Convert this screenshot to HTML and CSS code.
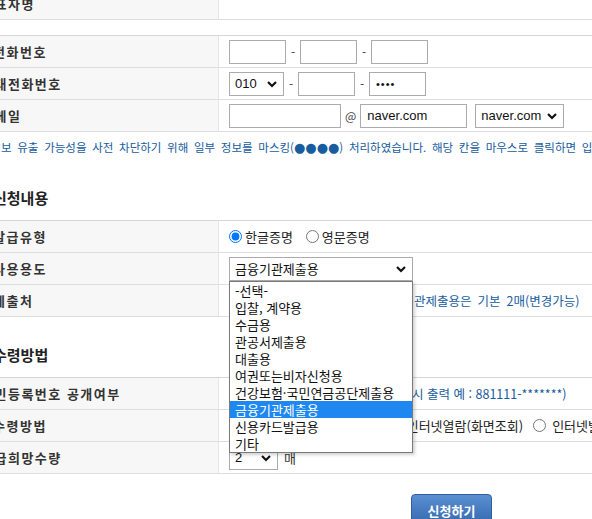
FILE: index.html
```html
<!DOCTYPE html>
<html lang="ko">
<head>
<meta charset="utf-8">
<title>증명서 발급 신청</title>
<link rel="stylesheet" href="styles.css">
</head>
<body>
<div class="page">
  <div class="table">
    <div class="row">
      <div class="label label--wide">대표자명</div>
      <div class="value"></div>
    </div>
  </div>

  <div class="table table--next">
    <div class="row">
      <div class="label">전화번호</div>
      <div class="value">
        <input class="field field--phone" type="text">
        <span class="dash">-</span>
        <input class="field field--phone" type="text">
        <span class="dash">-</span>
        <input class="field field--phone" type="text">
      </div>
    </div>
    <div class="row">
      <div class="label label--wide">휴대전화번호</div>
      <div class="value">
        <div class="select select--tel"><span>010</span><svg class="chev" viewBox="0 0 10 6"><path d="M1 1 L5 5 L9 1" /></svg></div>
        <span class="dash">-</span>
        <input class="field field--phone" type="text">
        <span class="dash">-</span>
        <input class="field field--phone field--secret" type="password" value="1234">
      </div>
    </div>
    <div class="row">
      <div class="label label--wide">이메일</div>
      <div class="value">
        <input class="field field--mailid" type="text">
        <span class="at">@</span>
        <input class="field field--domain" type="text" value="naver.com">
        <div class="select select--domain"><span>naver.com</span><svg class="chev" viewBox="0 0 10 6"><path d="M1 1 L5 5 L9 1" /></svg></div>
      </div>
    </div>
  </div>

  <p class="notice">※ 개인정보 유출 가능성을 사전 차단하기 위해 일부 정보를 마스킹(<span class="dots">●●●●</span>) 처리하였습니다. 해당 칸을 마우스로 클릭하면 입력할 수 있습니다.</p>

  <h2 class="section-title section-title--first">신청내용</h2>
  <div class="table">
    <div class="row">
      <div class="label">발급유형</div>
      <div class="value">
        <label class="radio"><input type="radio" name="lang" checked>한글증명</label>
        <label class="radio"><input type="radio" name="lang">영문증명</label>
      </div>
    </div>
    <div class="row">
      <div class="label">사용용도</div>
      <div class="value">
        <div class="select-wrap">
          <div class="select select--purpose"><span>금융기관제출용</span><svg class="chev" viewBox="0 0 10 6"><path d="M1 1 L5 5 L9 1" /></svg></div>
          <ul class="dropdown">
            <li>-선택-</li>
            <li>입찰, 계약용</li>
            <li>수금용</li>
            <li>관공서제출용</li>
            <li>대출용</li>
            <li>여권또는비자신청용</li>
            <li>건강보험·국민연금공단제출용</li>
            <li class="is-active">금융기관제출용</li>
            <li>신용카드발급용</li>
            <li>기타</li>
          </ul>
        </div>
      </div>
    </div>
    <div class="row">
      <div class="label">제출처</div>
      <div class="value">
        <input class="field field--dest" type="text">
        <span class="note note--dest">※ 금융기관제출용은 기본 2매(변경가능)</span>
      </div>
    </div>
  </div>

  <h2 class="section-title">수령방법</h2>
  <div class="table">
    <div class="row">
      <div class="label label--wide">주민등록번호 공개여부</div>
      <div class="value">
        <label class="radio"><input type="radio" name="open">공개</label>
        <label class="radio"><input type="radio" name="open" checked>비공개</label>
        <span class="note">(비공개 선택시 출력 예 : 881111-*******)</span>
      </div>
    </div>
    <div class="row">
      <div class="label">수령방법</div>
      <div class="value">
        <label class="radio radio--recv"><input type="radio" name="recv" checked>우편수령</label>
        <label class="radio radio--recv"><input type="radio" name="recv">방문수령</label>
        <label class="radio radio--tight"><input type="radio" name="recv">인터넷열람(화면조회)</label>
        <label class="radio radio--spaced"><input type="radio" name="recv">인터넷발급(출력)</label>
      </div>
    </div>
    <div class="row">
      <div class="label label--wide">발급희망수량</div>
      <div class="value">
        <div class="select select--count"><span>2</span><svg class="chev" viewBox="0 0 10 6"><path d="M1 1 L5 5 L9 1" /></svg></div>
        <span class="unit">매</span>
      </div>
    </div>
  </div>

  <div class="actions">
    <button class="btn-submit" type="button">신청하기</button>
  </div>
</div>
</body>
</html>
```
FILE: styles.css
```css
* { box-sizing: border-box; }

html, body {
  margin: 0;
  padding: 0;
  overflow: hidden;
  background: #fff;
}

body {
  width: 592px;
  height: 519px;
  font-family: "Noto Sans CJK KR", "Malgun Gothic", sans-serif;
  font-size: 13px;
  color: #222;
}

.page {
  width: 943px;
  margin: -13px 0 0 -20px;
}

.table {
  border-top: 1px solid #d6d6d6;
}

.table--next {
  margin-top: 15px;
}

.row {
  display: flex;
  height: 32px;
  border-bottom: 1px solid #dedede;
}

.label {
  flex: none;
  width: 239px;
  display: flex;
  align-items: center;
  padding-left: 13px;
  background: #f7f7f7;
  border-right: 1px solid #e6e6e6;
  font-size: 13px;
  font-weight: 700;
  letter-spacing: 1.5px;
  color: #333;
  white-space: nowrap;
}

.label--wide {
  padding-left: 1px;
}

.value {
  flex: 1;
  display: flex;
  align-items: center;
  gap: 4px;
  padding-left: 10px;
  white-space: nowrap;
}

.field {
  height: 24px;
  border: 1px solid #ababab;
  border-radius: 0;
  padding: 0 6px;
  font-family: "Liberation Sans", "Noto Sans CJK KR", sans-serif;
  font-size: 13px;
  color: #111;
  background: #fff;
  outline: none;
}

.field--phone { width: 57px; }
.field--mailid { width: 112px; }
.field--domain { width: 107px; }
.field--dest { width: 126px; margin-right: 2px; }
.field--secret { font-size: 11px; letter-spacing: 1px; }

.dash {
  width: 6px;
  text-align: center;
  color: #444;
  font-size: 12px;
}

.at {
  font-size: 12px;
  color: #444;
}

.select {
  display: flex;
  align-items: center;
  justify-content: space-between;
  height: 24px;
  padding: 0 6px 0 5px;
  border: 1px solid #ababab;
  background: #fff;
  color: #111;
  font-size: 13px;
}

.select--tel { width: 55px; font-family: "Liberation Sans", sans-serif; font-size: 13px; }
.select--domain { width: 89px; margin-left: 4px; font-family: "Liberation Sans", sans-serif; font-size: 13px; }
.select--purpose { width: 184px; }
.select--count { width: 49px; font-family: "Liberation Sans", sans-serif; font-size: 13px; }

.chev {
  flex: none;
  width: 10px;
  height: 6px;
  overflow: visible;
}

.chev path {
  fill: none;
  stroke: #111;
  stroke-width: 2.2;
}

.select-wrap {
  position: relative;
}

.dropdown {
  position: absolute;
  left: 0;
  top: 24px;
  z-index: 5;
  width: 184px;
  margin: 0;
  padding: 0;
  list-style: none;
  background: #fff;
  border: 1px solid #7a7a7a;
  box-shadow: 2px 2px 3px rgba(0, 0, 0, 0.18);
}

.dropdown li {
  height: 17px;
  line-height: 17px;
  padding-left: 5px;
  font-size: 13px;
  color: #111;
  white-space: nowrap;
}

.dropdown .is-active {
  background: #1e88f0;
  color: #fff;
}

.radio {
  display: inline-flex;
  align-items: center;
  gap: 3px;
  margin-right: 9px;
  color: #222;
}

.radio input {
  width: 13px;
  height: 13px;
  margin: 0;
}

.radio--recv { margin-right: 13px; }
.radio--tight { margin-right: 6px; }
.radio--spaced { gap: 6px; }

.note {
  font-size: 12.5px;
  color: #175c9e;
}

.note--dest {
  word-spacing: 2.5px;
}

.unit {
  margin-left: 2px;
  color: #333;
}

.notice {
  margin: 6px 0 0;
  height: 18px;
  line-height: 18px;
  font-size: 11.5px;
  word-spacing: 2.5px;
  text-indent: -28px;
  color: #175c9e;
  white-space: nowrap;
}

.dots {
  font-family: "DejaVu Sans", sans-serif;
  font-size: 13px;
  word-spacing: 0;
}

.section-title {
  margin: 27px 0 11px;
  padding-left: 13px;
  height: 22px;
  line-height: 22px;
  font-size: 15px;
  font-weight: 700;
  color: #222;
}

.section-title--first {
  margin-top: 31px;
}

.actions {
  display: flex;
  justify-content: center;
  margin-top: 20px;
}

.btn-submit {
  width: 81px;
  height: 32px;
  border: 1px solid #2e5f9f;
  border-radius: 4px;
  background: linear-gradient(#5a8fd2, #3468ad);
  color: #fff;
  font-family: "Noto Sans CJK KR", sans-serif;
  font-size: 13px;
  font-weight: 700;
}
```
